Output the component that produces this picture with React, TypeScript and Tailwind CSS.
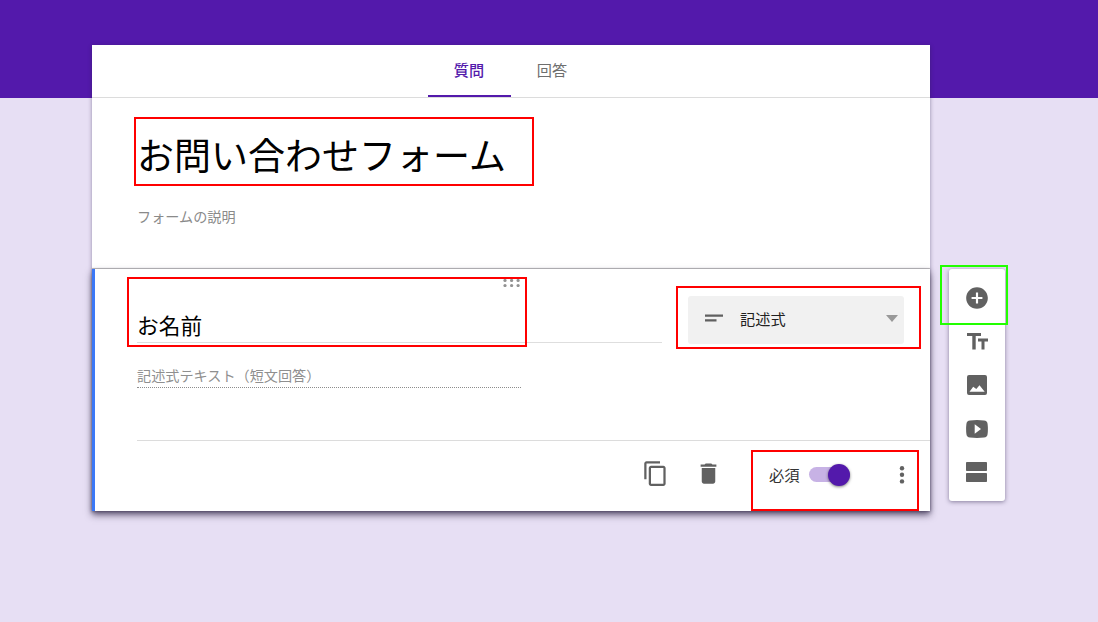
import React from "react";

type IconProps = { className?: string };

const AddIcon = ({ className }: IconProps) => (
  <svg viewBox="0 0 24 24" className={className} fill="currentColor">
    <path d="M12 2C6.48 2 2 6.48 2 12s4.48 10 10 10 10-4.48 10-10S17.52 2 12 2zm5 11h-4v4h-2v-4H7v-2h4V7h2v4h4v2z" />
  </svg>
);

const TitleIcon = ({ className }: IconProps) => (
  <svg viewBox="0 0 21 17" className={className} fill="currentColor">
    <path d="M0 0h14v3H8.7v13.5H5.3V3H0zM11 5.5h10v3h-3.5v8h-3v-8H11z" />
  </svg>
);

const ImageIcon = ({ className }: IconProps) => (
  <svg viewBox="0 0 20 20" className={className} fill="currentColor">
    <path
      fillRule="evenodd"
      d="M2 0h16a2 2 0 0 1 2 2v16a2 2 0 0 1-2 2H2a2 2 0 0 1-2-2V2a2 2 0 0 1 2-2zM2.5 16.7h15.2L12.5 10.2 9.3 14 6.2 11.8z"
    />
  </svg>
);

const VideoIcon = ({ className }: IconProps) => (
  <svg viewBox="0 0 22 18" className={className} fill="currentColor">
    <path
      fillRule="evenodd"
      d="M4 .4Q11-.3 18 .4Q21.3.6 21.6 4Q22.2 9 21.6 14Q21.3 17.4 18 17.6Q11 18.3 4 17.6Q.7 17.4.4 14Q-.2 9 .4 4Q.7.6 4 .4zM8.7 4.2v9.6L15 9z"
    />
  </svg>
);

const SectionIcon = ({ className }: IconProps) => (
  <svg viewBox="0 0 21 20" className={className} fill="currentColor">
    <rect width="21" height="9" rx=".8" />
    <rect y="11" width="21" height="9" rx=".8" />
  </svg>
);

const CopyIcon = ({ className }: IconProps) => (
  <svg viewBox="0 0 24 24" className={className} fill="currentColor">
    <path d="M16 1H4c-1.1 0-2 .9-2 2v14h2V3h12V1zm3 4H8c-1.1 0-2 .9-2 2v14c0 1.1.9 2 2 2h11c1.1 0 2-.9 2-2V7c0-1.1-.9-2-2-2zm0 16H8V7h11v14z" />
  </svg>
);

const TrashIcon = ({ className }: IconProps) => (
  <svg viewBox="0 0 24 24" className={className} fill="currentColor">
    <path d="M6 19c0 1.1.9 2 2 2h8c1.1 0 2-.9 2-2V7H6v12zM19 4h-3.5l-1-1h-5l-1 1H5v2h14V4z" />
  </svg>
);

const toolbar = [
  { label: "質問を追加", Icon: AddIcon, size: "size-[26px]" },
  { label: "タイトルを追加", Icon: TitleIcon, size: "h-[17px] w-[21px]" },
  { label: "画像を追加", Icon: ImageIcon, size: "size-5" },
  { label: "動画を追加", Icon: VideoIcon, size: "h-[18px] w-[22px]" },
  { label: "セクションを追加", Icon: SectionIcon, size: "mr-[2px] h-5 w-[21px]" },
];

function Tabs() {
  return (
    <nav className="flex h-[53px] justify-center border-b border-[#dcdcdc] text-[15.2px]">
      <button className="w-[83px] border-b-2 border-[#5319ab] pb-[2px] pr-px font-medium text-[#5319ab]">質問</button>
      <button className="w-[83px] border-b-2 border-transparent pb-[2px] pr-px text-[#6e6e6e]">回答</button>
    </nav>
  );
}

function QuestionCard() {
  return (
    <section className="relative h-[242px] border-l-[3px] border-[#3b78f6] bg-white pl-[42px] shadow-[0_4px_7px_0_rgba(40,30,60,0.65),0_0_2px_rgba(40,30,60,0.35)]">
      <svg viewBox="0 0 18 8" className="absolute left-[408px] top-[10px] h-2 w-[18px]" fill="#929292">
        {[2, 8.6, 15.1].map((x) => (
          <g key={x}>
            <circle cx={x} cy="1.5" r="1.6" />
            <circle cx={x} cy="6.5" r="1.6" />
          </g>
        ))}
      </svg>
      <div className="flex h-[100px] pt-[27px]">
        <div className="flex h-[47px] w-[525px] items-end border-b border-[#dedede] pb-[2px] text-[21.7px] leading-[30px] text-black">
          お名前
        </div>
        <button className="ml-[26px] flex h-12 w-[216px] items-center rounded-[3px] bg-[#f1f1f1] pb-[3px] pl-[17px] pr-[6px] text-[15.2px] text-[#212121]">
          <svg viewBox="0 0 18 8" className="mt-[-2px] h-2 w-[18px]" fill="#606060">
            <path d="M0 .5h18v2.2H0zM0 5.2h11.5v2.2H0z" />
          </svg>
          <span className="ml-[17px] flex-1 text-left">記述式</span>
          <svg viewBox="0 0 12 7" className="h-[7px] w-3" fill="#999">
            <path d="M0 0h12L6 7z" />
          </svg>
        </button>
      </div>
      <div className="h-[19px] w-[384px] border-b border-dotted border-[#8d8d8d] text-[14.15px] leading-[13px] text-[#8f8f8f]">
        記述式テキスト（短文回答）
      </div>
      <footer className="mt-[52px] flex h-[70px] items-center border-t border-[#dcdcdc] pb-[2px] pl-[505px] text-[#616161]">
        <CopyIcon className="mt-[-3px] size-[27px]" />
        <TrashIcon className="ml-[25.5px] mt-[-3px] size-[27px]" />
        <span className="ml-[47.5px] w-[31px] text-[15.3px] text-[#333]">必須</span>
        <span className="ml-[9px] flex h-[15px] w-[41px] items-center justify-end rounded-full bg-[#c7b2e5]">
          <span className="size-[22px] shrink-0 rounded-full bg-[#5319ab] shadow-[0_1px_3px_rgba(0,0,0,0.5)]" />
        </span>
        <svg viewBox="0 0 6 20" className="ml-[49px] h-5 w-1.5" fill="currentColor">
          <circle cx="3" cy="3.2" r="2.2" />
          <circle cx="3" cy="9.8" r="2.2" />
          <circle cx="3" cy="16.4" r="2.2" />
        </svg>
      </footer>
    </section>
  );
}

export default function App() {
  return (
    <div className="relative h-[622px] w-[1098px] overflow-hidden bg-[linear-gradient(#5319ab_98px,#e7dff4_98px)] font-['Noto_Sans_CJK_JP',sans-serif]">
      <div className="flex items-start pl-[92px] pt-[45px]">
        <main className="w-[838px] bg-white shadow-[0_1px_4px_rgba(40,30,70,0.45)]">
          <Tabs />
          <header className="h-[171px] border-b border-[#c9c9c9] pl-[45px] pt-[28px]">
            <h1 className="text-[37px] font-normal leading-[56px] text-black">お問い合わせフォーム</h1>
            <p className="mt-[24px] text-[14.15px] leading-5 text-[#8a8a8a]">フォームの説明</p>
          </header>
          <QuestionCard />
        </main>
        <aside className="ml-[19px] mt-[224px] flex h-[232px] w-14 flex-col items-center rounded-[3px] bg-white pt-[7px] text-[#616161] shadow-[0_1px_4px_rgba(40,30,70,0.5)]">
          {toolbar.map(({ label, Icon, size }) => (
            <button key={label} aria-label={label} className="flex h-[43.6px] w-14 items-center justify-center">
              <Icon className={size} />
            </button>
          ))}
        </aside>
      </div>

      <div className="absolute left-[134px] top-[117px] h-[69px] w-[400px] border-2 border-[#ff0000]" />
      <div className="absolute left-[127px] top-[277px] h-[70px] w-[400px] border-2 border-[#ff0000]" />
      <div className="absolute left-[676px] top-[286px] h-[63px] w-[245px] border-2 border-[#ff0000]" />
      <div className="absolute left-[751px] top-[450px] h-[61px] w-[168px] border-2 border-[#ff0000]" />
      <div className="absolute left-[940px] top-[265px] h-[60px] w-[68px] border-2 border-[#22ff00]" />
    </div>
  );
}
